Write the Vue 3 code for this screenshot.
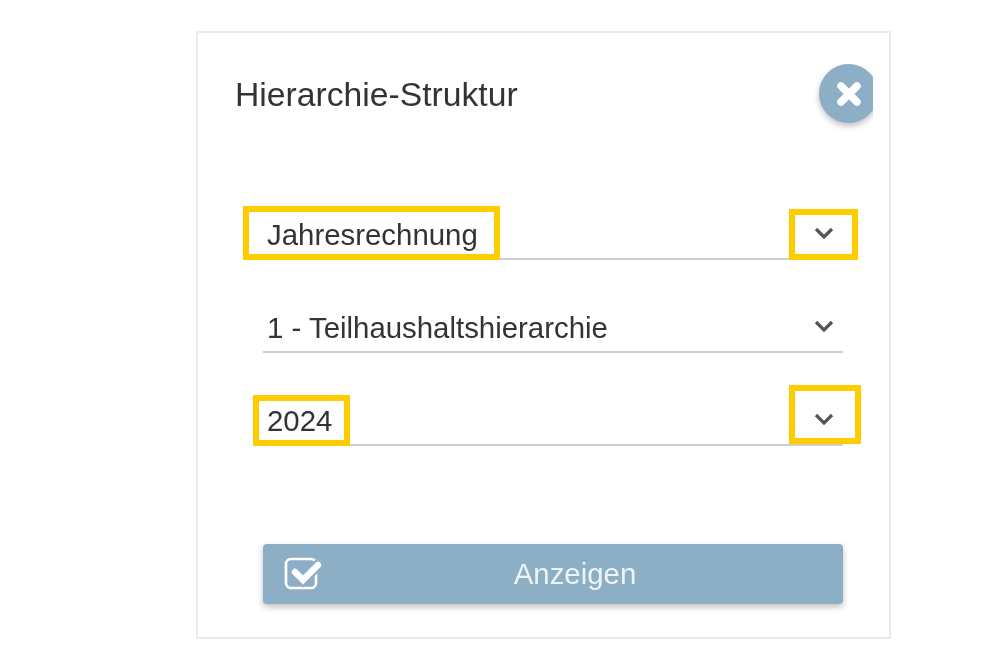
<script setup>
const selects = [
  { label: 'Jahresrechnung' },
  { label: '1 - Teilhaushaltshierarchie' },
  { label: '2024' },
]
const marks = [
  { id: 'name', cls: 'mark-name' },
  { id: 'chev1', cls: 'mark-chev1' },
  { id: 'year', cls: 'mark-year' },
  { id: 'chev3', cls: 'mark-chev3' },
]
</script>

<template>
  <div class="page">
    <section class="card">
      <header class="head">
        <h1 class="title">Hierarchie-Struktur</h1>
        <div class="close-clip">
          <button class="close" aria-label="Schließen">
            <svg width="30" height="30" viewBox="0 0 30 30">
              <path d="M7 7 L23 23 M23 7 L7 23" stroke="#fff" stroke-width="7.5" stroke-linecap="round" fill="none" />
            </svg>
          </button>
        </div>
      </header>

      <div class="fields">
        <div v-for="s in selects" :key="s.label" class="field">
          <span class="value">{{ s.label }}</span>
          <svg class="chev" width="22" height="14" viewBox="0 0 22 14">
            <path d="M3 3 L11 11 L19 3" stroke="#555" stroke-width="3.2" fill="none" />
          </svg>
        </div>
      </div>

      <button class="show">
        <svg class="show-icon" width="40" height="36" viewBox="0 0 40 36">
          <rect x="3" y="4" width="30" height="29" rx="5" fill="none" stroke="#fff" stroke-width="2.6" />
          <path d="M12 17 L20 25 L35 10" stroke="#8cafc6" stroke-width="11" stroke-linecap="round" fill="none" />
          <path d="M12 17 L20 25 L35 10" stroke="#fff" stroke-width="6.5" stroke-linecap="round" fill="none" />
        </svg>
        <span class="show-label">Anzeigen</span>
      </button>

      <i v-for="m in marks" :key="m.id" class="mark" :class="m.cls"></i>
    </section>
  </div>
</template>

<style scoped>
.page {
  padding: 31px 0 0 196px;
  font-family: "Liberation Sans", Arial, sans-serif;
  color: #333;
}
.card {
  position: relative;
  box-sizing: border-box;
  width: 695px;
  height: 608px;
  border: 2px solid #e9eaea;
  background: #fff;
  padding: 31px 46px 0 37px;
  filter: blur(0.45px);
}
.head {
  display: flex;
  justify-content: space-between;
  align-items: flex-start;
  height: 79px;
}
.title {
  margin: 0;
  padding-top: 12px;
  font-size: 33.7px;
  line-height: 36px;
  font-weight: 400;
  color: #333;
}
.close-clip {
  width: 70px;
  height: 75px;
  margin-right: -30px;
  overflow: hidden;
  padding: 0 0 0 16px;
  box-sizing: border-box;
}
.close {
  display: flex;
  align-items: center;
  justify-content: center;
  width: 59px;
  height: 59px;
  padding: 0;
  border: 0;
  border-radius: 50%;
  background: #8cafc6;
  box-shadow: 0 3px 6px rgba(0, 0, 0, 0.25);
}
.fields {
  display: flex;
  flex-direction: column;
  margin: 24px 0 0 28px;
  width: 580px;
}
.field {
  box-sizing: border-box;
  display: flex;
  align-items: center;
  justify-content: space-between;
  height: 93px;
  padding: 45px 8px 0 4px;
  border-bottom: 2px solid #cfcfcf;
  font-size: 29.4px;
  color: #333;
}
.chev {
  margin-top: -4px;
}
.show {
  position: relative;
  display: flex;
  align-items: center;
  justify-content: center;
  box-sizing: border-box;
  width: 580px;
  height: 60px;
  margin: 98px 0 0 28px;
  padding: 0 0 0 44px;
  border: 0;
  border-radius: 4px;
  background: #8cafc6;
  box-shadow: 0 3px 6px rgba(0, 0, 0, 0.25);
  color: #eef3f7;
  font-family: inherit;
  font-size: 29.4px;
}
.show-icon {
  position: absolute;
  left: 20px;
  top: 11px;
}
.mark {
  position: absolute;
  box-sizing: border-box;
  border: 6px solid #ffcc00;
}
.mark-name { left: 45px; top: 173px; width: 257px; height: 54px; }
.mark-chev1 { left: 591px; top: 176px; width: 69px; height: 51px; }
.mark-year { left: 55px; top: 362px; width: 97px; height: 51px; }
.mark-chev3 { left: 591px; top: 352px; width: 72px; height: 59px; }
</style>
